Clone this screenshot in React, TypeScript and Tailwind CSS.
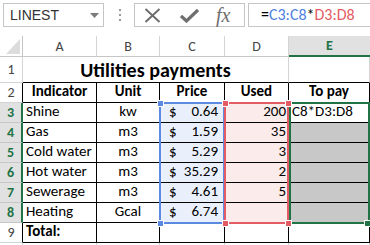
import React from "react";

const FONT = { fontFamily: "Carlito, Lato, 'Liberation Sans', sans-serif" };

type Row = {
  n: string;
  sel: boolean;
  a: string;
  b: string;
  c?: string;
  d?: string;
  e?: string;
  bold?: boolean;
};

const rows: Row[] = [
  { n: "3", sel: true, a: "Shine", b: "kw", c: "0.64", d: "200", e: "C8*D3:D8" },
  { n: "4", sel: true, a: "Gas", b: "m3", c: "1.59", d: "35" },
  { n: "5", sel: true, a: "Cold water", b: "m3", c: "5.29", d: "3" },
  { n: "6", sel: true, a: "Hot water", b: "m3", c: "35.29", d: "2" },
  { n: "7", sel: true, a: "Sewerage", b: "m3", c: "4.61", d: "5" },
  { n: "8", sel: true, a: "Heating", b: "Gcal", c: "6.74", d: "" },
];

function Square({ color, left, top }: { color: string; left: number; top: number }) {
  return (
    <div
      className="absolute w-[7px] h-[7px] border border-white"
      style={{ left: left - 3, top: top - 3, backgroundColor: color }}
    />
  );
}

export default function App() {
  const cell = "border-r border-b border-black text-[15px] leading-none flex items-end pb-[3px] overflow-hidden whitespace-nowrap";
  return (
    <div className="w-[370px] h-[245px] overflow-hidden bg-white text-black" style={FONT}>
      {/* Toolbar */}
      <div className="h-[36px] flex items-start pt-[3px]">
        <div className="ml-[3px] w-[101px] h-[24px] border border-[#c6c6c6] flex items-center pl-[6px] pr-[4px] justify-between">
          <span className="text-[15px] text-[#333]" style={{ fontFamily: "'Liberation Sans', sans-serif", fontSize: 14 }}>LINEST</span>
          <svg width="9" height="5" viewBox="0 0 9 5"><path d="M0 0 H9 L4.5 5 Z" fill="#7a7a7a" /></svg>
        </div>
        <div className="ml-[15px] h-[24px] flex flex-col justify-center gap-[3px]">
          <div className="w-[2px] h-[2px] bg-[#9a9a9a]" />
          <div className="w-[2px] h-[2px] bg-[#9a9a9a]" />
          <div className="w-[2px] h-[2px] bg-[#9a9a9a]" />
        </div>
        <div className="ml-[13px] w-[111px] h-[24px] border border-[#c6c6c6] flex items-center">
          <svg className="ml-[9px]" width="17" height="15" viewBox="0 0 17 15">
            <path d="M1.5 1 L15.5 14 M15.5 1 L1.5 14" stroke="#6e6e6e" strokeWidth="2" />
          </svg>
          <svg className="ml-[19px]" width="19" height="15" viewBox="0 0 19 15">
            <path d="M1 8 L6.5 13 L18 2" stroke="#6e6e6e" strokeWidth="3.2" fill="none" />
          </svg>
          <span
            className="ml-[17px] text-[20px] text-[#6e6e6e] italic leading-none"
            style={{ fontFamily: "'Liberation Serif', serif" }}
          >
            fx
          </span>
        </div>
        <div className="ml-[3px] flex-1 h-[24px] border border-[#c6c6c6] border-r-0 flex items-center pl-[12px] text-[16px]">
          <span className="text-black">=</span>
          <span className="text-[#4f81e0]">C3:C8</span>
          <span className="text-black">*</span>
          <span className="text-[#e45c63]">D3:D8</span>
        </div>
      </div>

      {/* Sheet */}
      <div className="relative grid grid-cols-[23px_74px_63px_65px_64px_81px] grid-rows-[21px_26px_repeat(9,20px)]">
        {/* Header row */}
        <div className="border-r border-b border-[#c6c6c6] relative">
          <svg className="absolute left-[6px] top-[3px]" width="14" height="15" viewBox="0 0 14 15">
            <path d="M14 0 V15 H0 Z" fill="#dcdcdc" />
          </svg>
        </div>
        {["A", "B", "C", "D"].map((l) => (
          <div key={l} className="border-r border-b border-[#d4d4d4] border-b-[#c6c6c6] flex items-center justify-center text-[14px] text-[#444]">
            {l}
          </div>
        ))}
        <div className="bg-[#e1e1e1] border-b-2 border-[#217346] flex items-center justify-center text-[14px] font-bold text-[#217346]">
          E
        </div>

        {/* Row 1 */}
        <div className="border-r border-b border-[#d4d4d4] flex items-center justify-center text-[14px] text-[#444]">1</div>
        <div className="col-span-4 border-r border-r-[#d4d4d4] border-b border-b-black flex items-end justify-center pb-[2px] text-[20px] font-bold leading-none">
          Utilities payments
        </div>
        <div className="border-r border-r-[#d4d4d4] border-b border-b-black" />

        {/* Row 2 */}
        <div className="border-r border-b border-black border-b-[#d4d4d4] flex items-center justify-center text-[14px] text-[#444]">2</div>
        {["Indicator", "Unit", "Price", "Used", "To pay"].map((h) => (
          <div key={h} className={`${cell} justify-center font-bold`}>
            {h}
          </div>
        ))}

        {/* Rows 3-8 */}
        {rows.map((r) => (
          <React.Fragment key={r.n}>
            <div className="bg-[#e1e1e1] border-r-2 border-r-[#217346] border-b border-b-[#c6c6c6] flex items-center justify-center text-[14px] font-bold text-[#217346]">
              {r.n}
            </div>
            <div className={`${cell} pl-[3px]`}>{r.a}</div>
            <div className={`${cell} justify-center`}>{r.b}</div>
            <div className={`${cell} bg-[#eaf0fb] justify-between pl-[9px] pr-[6px]`}>
              <span>$</span>
              <span>{r.c}</span>
            </div>
            <div className={`${cell} bg-[#fcebeb] justify-end pr-[2px]`}>{r.d}</div>
            {r.e ? (
              <div className={`${cell} pl-[3px]`}>{r.e}</div>
            ) : (
              <div className={`${cell} bg-[#c8c8c8]`} />
            )}
          </React.Fragment>
        ))}

        {/* Row 9 */}
        <div className="border-r border-b border-black border-b-[#d4d4d4] flex items-center justify-center text-[14px] text-[#444]">9</div>
        <div className={`${cell} pl-[3px] font-bold`}>Total:</div>
        <div className={cell} />
        <div className={cell} />
        <div className={cell} />
        <div className={cell} />

        {/* Row 10 */}
        <div className="border-r border-[#d4d4d4]" />
        <div className="border-r border-[#d4d4d4]" />
        <div className="border-r border-[#d4d4d4]" />
        <div className="border-r border-[#d4d4d4]" />
        <div className="border-r border-[#d4d4d4]" />
        <div className="border-r border-[#d4d4d4]" />

        {/* Range highlights */}
        <div className="absolute left-[159px] top-[66px] w-[66px] h-[122px] border-2 border-[#5b8ae0]" />
        <div className="absolute left-[224px] top-[66px] w-[65px] h-[122px] border-2 border-[#e45c63]" />
        <div className="absolute left-[289px] top-[66px] w-[81px] h-[122px] border-2 border-[#217346]" />

        <Square color="#5b8ae0" left={160} top={67} />
        <Square color="#5b8ae0" left={160} top={187} />
        <Square color="#e45c63" left={225} top={67} />
        <Square color="#e45c63" left={288} top={67} />
        <Square color="#e45c63" left={225} top={187} />
        <Square color="#e45c63" left={288} top={187} />
        <Square color="#217346" left={367} top={187} />
      </div>
    </div>
  );
}
